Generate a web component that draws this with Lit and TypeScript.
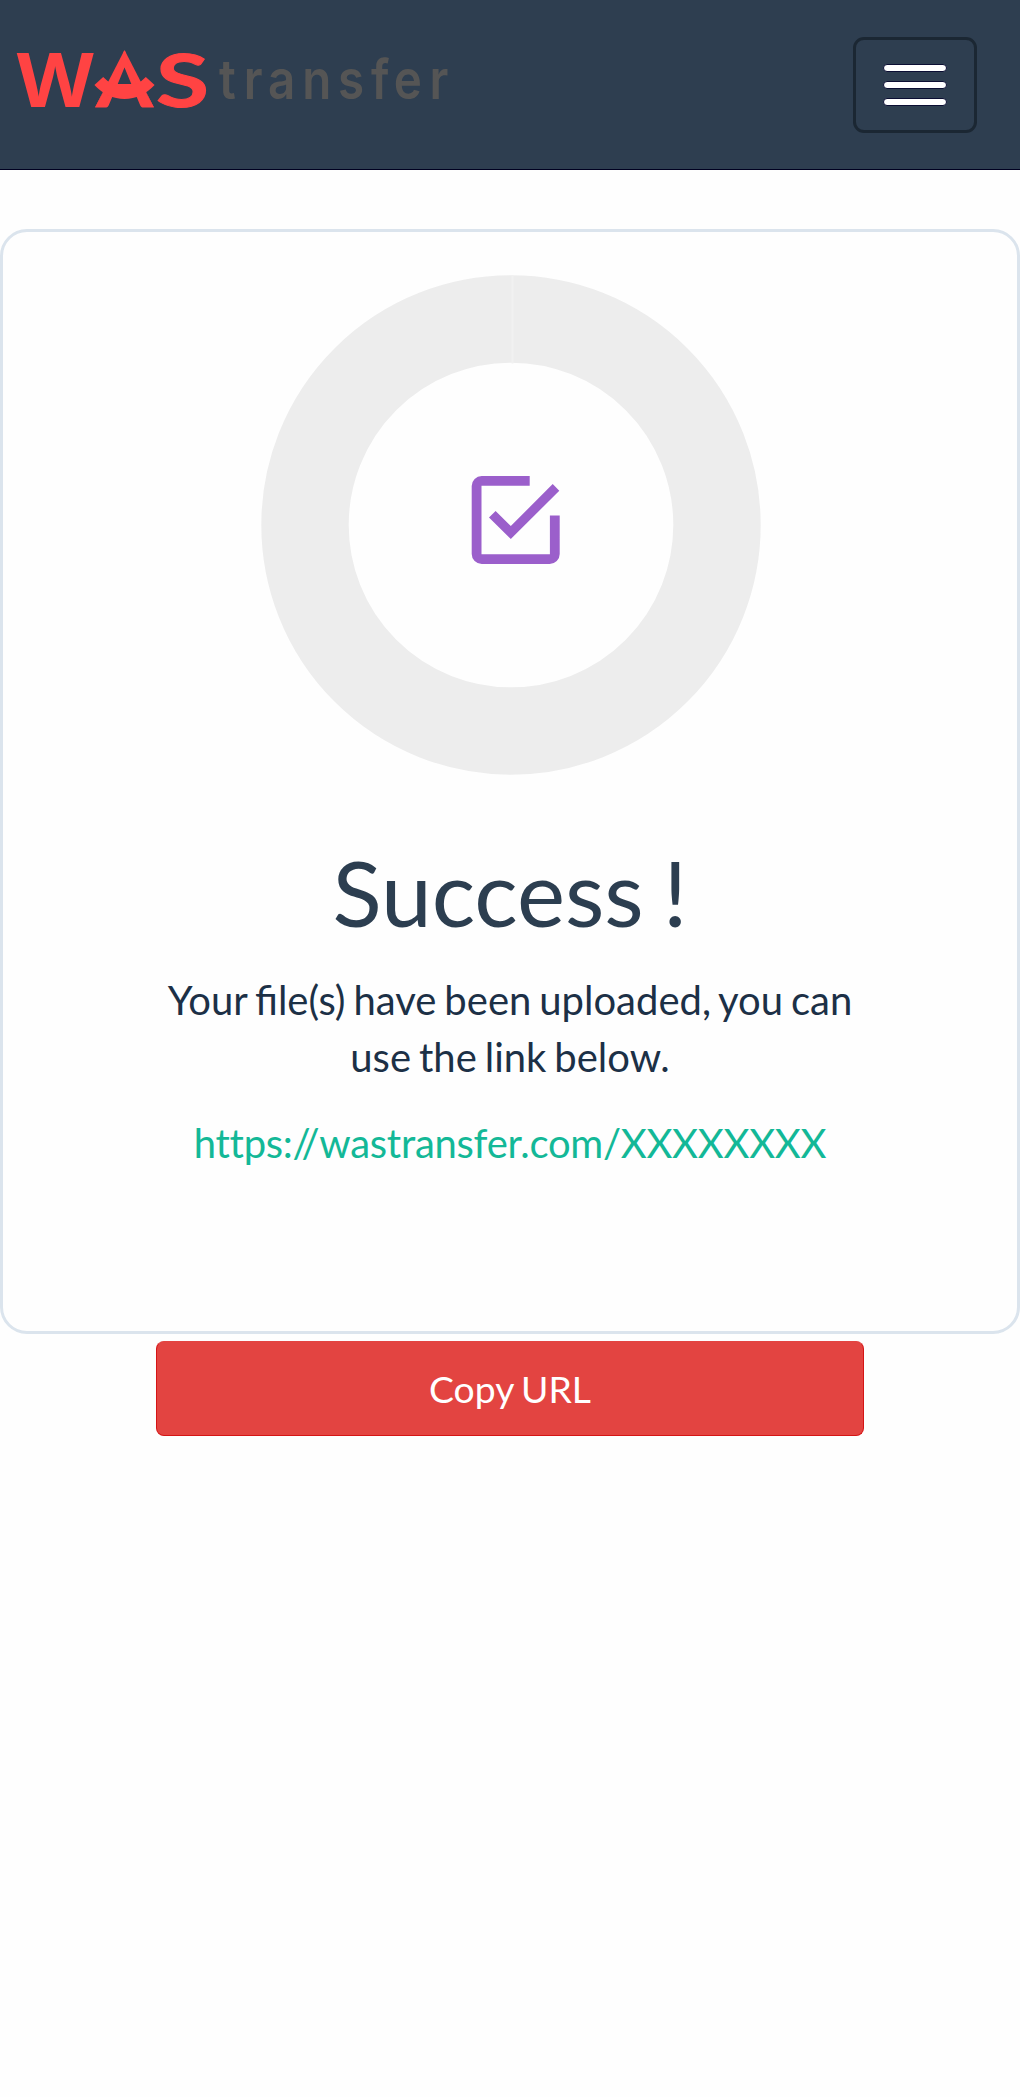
import { css, html, LitElement, svg } from "lit";
import { customElement, property } from "lit/decorators.js";

@customElement("was-logo")
export class WasLogo extends LitElement {
  static styles = css`
  :host {
    display: block;
  }

  svg {
    display: block;
  }

  .brand {
    font-family: Lato, sans-serif;
    font-weight: 700;
    font-size: 73px;
    fill: #ff4343;
  }

  .brand-w {
    font-family: "Open Sans", sans-serif;
    font-size: 75px;
  }

  .brand-a {
    font-size: 77px;
    stroke: #ff4343;
    stroke-width: 4;
  }

  .brand-s {
    stroke: #ff4343;
    stroke-width: 1;
  }

  .word {
    font-family: Inter, sans-serif;
    font-weight: 600;
    font-size: 54px;
    fill: #555;
  }

  .smile {
    fill: none;
    stroke: #ff4343;
    stroke-width: 12;
  }
  `

  render() {
    return html`
      <svg width="460" height="169" viewBox="0 0 460 169">
        <!-- trims the flat top of the A to a point -->
        <clipPath id="peak"><path d="M124.5 50L154 107.5H95Z" /></clipPath>
        <text class="brand brand-w" x="16.8" y="107" textLength="77" lengthAdjust="spacingAndGlyphs">W</text>
        <text class="brand brand-a" x="94" y="107" textLength="61" lengthAdjust="spacingAndGlyphs" clip-path="url(#peak)">A</text>
        <text class="brand brand-s" x="156" y="107" textLength="53" lengthAdjust="spacingAndGlyphs">S</text>
        <path class="smile" d="M98.8 81 Q110 93 124.5 93 T150.2 81" />
        <g transform="scale(.88 1)">
          <text class="word" y="99" x="249 277 304.5 343.5 384 421.5 447.5 488">transfer</text>
        </g>
      </svg>
    `;
  }
}

@customElement("progress-ring")
export class ProgressRing extends LitElement {
  static styles = css`
  :host {
    display: block;
  }

  svg {
    display: block;
  }
  `

  check = svg`
    <path fill="#9b5fcb" d="M268.7 201h-48a10 10 0 0 0-10 10v68a10 10 0 0 0 10 10h68a10 10 0 0 0 10-10v-38.6h-9.8v38.8h-68.4v-68.4h48.2z
      M234.6 235.9l-6.6 6.6 21.8 21.6 48.5-48.4-6.6-6.6-41.9 41.9z" />
  `;

  render() {
    return html`
      <svg width="500" height="500" viewBox="0 0 500 500">
        <circle cx="250" cy="250" r="206" fill="none" stroke="#ededed" stroke-width="87.4" />
        <path d="M251.5 .5v88" stroke="#f1f1f1" stroke-width="2" />
        ${this.check}
      </svg>
    `;
  }
}

@customElement("app-root")
export class AppRoot extends LitElement {
  static styles = css`
  :host {
    display: block;
    min-height: 2097px;
    background: #fefefe;
    color: #1c3046;
    font-family: Lato, sans-serif;
    font-size: 40px;
    line-height: 57px;
  }

  .navbar {
    box-sizing: border-box;
    display: flex;
    justify-content: space-between;
    height: 170px;
    padding-right: 43px;
    background: #2e3e50;
    border-bottom: 1px solid #000020;
  }

  .toggle {
    box-sizing: border-box;
    display: flex;
    flex-direction: column;
    align-items: center;
    justify-content: center;
    gap: 9px;
    width: 124px;
    height: 96px;
    margin-top: 37px;
    padding: 0;
    background: none;
    border: 3px solid #1b2733;
    border-radius: 11px;
  }

  .bar {
    box-sizing: border-box;
    width: 64px;
    height: 8px;
    border: 1px solid #0b0e33;
    border-radius: 4px;
    background: #fff;
  }

  .card {
    box-sizing: border-box;
    display: flex;
    flex-direction: column;
    align-items: center;
    height: 1105px;
    margin-top: 59px;
    padding-top: 43px;
    border: 3px solid #dbe4ed;
    border-radius: 27px;
    text-align: center;
  }

  .ring {
    margin-left: 2px;
  }

  h2 {
    margin: 70px 0 0;
    color: #2c3e50;
    font-size: 91px;
    font-weight: 400;
    line-height: 94px;
    word-spacing: -4px;
  }

  p {
    width: 708px;
    margin: 33px 0 0;
    word-spacing: -2.3px;
  }

  a {
    margin-top: 29px;
    color: #13b897;
    letter-spacing: -.27px;
    text-decoration: none;
  }

  .copy {
    box-sizing: border-box;
    display: block;
    width: 708px;
    height: 95px;
    margin: 7px auto 0;
    padding: 0;
    border: 1px solid #d51515;
    border-top-color: #e34441;
    border-radius: 8px;
    background: #e34441;
    color: #fff;
    font: inherit;
    font-size: 37.3px;
    word-spacing: -2px;
  }
  `

  @property() url = "https://wastransfer.com/XXXXXXXX";

  copyHandler() {
    navigator.clipboard?.writeText(this.url);
  }

  render() {
    return html`
      <nav class="navbar">
        <was-logo></was-logo>
        <button class="toggle" aria-label="Menu">
          <span class="bar"></span>
          <span class="bar"></span>
          <span class="bar"></span>
        </button>
      </nav>
      <section class="card">
        <progress-ring class="ring"></progress-ring>
        <h2>Success !</h2>
        <p>Your file(s) have been uploaded, you can use the link below.</p>
        <a href=${this.url}>${this.url}</a>
      </section>
      <button class="copy" @click=${this.copyHandler}>Copy URL</button>
    `;
  }
}
